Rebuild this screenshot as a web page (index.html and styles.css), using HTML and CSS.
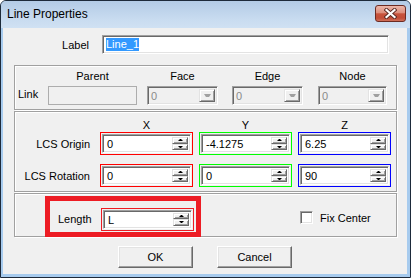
FILE: index.html
```html
<!DOCTYPE html>
<html lang="en">
<head>
    <meta charset="UTF-8">
    <title>Line Properties</title>
    <link rel="stylesheet" href="styles.css">
</head>
<body>
    <div class="window">
        <div class="titlebar">
            <span class="title">Line Properties</span>
            <div class="close-btn">
                <svg width="13" height="11" viewBox="0 0 13 11">
                    <path d="M2.5 2 L10.5 9 M10.5 2 L2.5 9" stroke="#5a2a24" stroke-width="4" stroke-linecap="square"/>
                    <path d="M2.5 2 L10.5 9 M10.5 2 L2.5 9" stroke="#fff" stroke-width="2.2" stroke-linecap="square"/>
                </svg>
            </div>
        </div>

        <div class="client">
            <div class="label-row">
                <span class="caption">Label</span>
                <div class="textbox sunken"><span class="selected">Line_1</span></div>
            </div>

            <div class="group link-group">
                <span class="link-label">Link</span>
                <div class="col col-parent">
                    <div class="col-head">Parent</div>
                    <div class="field-disabled"></div>
                </div>
                <div class="col col-face">
                    <div class="col-head">Face</div>
                    <div class="combo sunken"><span class="val">0</span><span class="drop raised"><i class="arrow-down"></i></span></div>
                </div>
                <div class="col col-edge">
                    <div class="col-head">Edge</div>
                    <div class="combo sunken"><span class="val">0</span><span class="drop raised"><i class="arrow-down"></i></span></div>
                </div>
                <div class="col col-node">
                    <div class="col-head">Node</div>
                    <div class="combo sunken"><span class="val">0</span><span class="drop raised"><i class="arrow-down"></i></span></div>
                </div>
            </div>

            <div class="group lcs-group">
                <div class="lcs-row lcs-head">
                    <span></span>
                    <span>X</span>
                    <span>Y</span>
                    <span>Z</span>
                </div>
                <div class="lcs-row">
                    <span class="row-label">LCS Origin</span>
                    <div class="spin red"><div class="edit sunken"><span class="val">0</span><span class="spin-btns"><span class="raised"><i class="arrow-up"></i></span><span class="raised"><i class="arrow-down"></i></span></span></div></div>
                    <div class="spin green"><div class="edit sunken"><span class="val">-4.1275</span><span class="spin-btns"><span class="raised"><i class="arrow-up"></i></span><span class="raised"><i class="arrow-down"></i></span></span></div></div>
                    <div class="spin blue"><div class="edit sunken"><span class="val">6.25</span><span class="spin-btns"><span class="raised"><i class="arrow-up"></i></span><span class="raised"><i class="arrow-down"></i></span></span></div></div>
                </div>
                <div class="lcs-row second">
                    <span class="row-label">LCS Rotation</span>
                    <div class="spin red"><div class="edit sunken"><span class="val">0</span><span class="spin-btns"><span class="raised"><i class="arrow-up"></i></span><span class="raised"><i class="arrow-down"></i></span></span></div></div>
                    <div class="spin green"><div class="edit sunken"><span class="val">0</span><span class="spin-btns"><span class="raised"><i class="arrow-up"></i></span><span class="raised"><i class="arrow-down"></i></span></span></div></div>
                    <div class="spin blue"><div class="edit sunken"><span class="val">90</span><span class="spin-btns"><span class="raised"><i class="arrow-up"></i></span><span class="raised"><i class="arrow-down"></i></span></span></div></div>
                </div>
            </div>

            <div class="group length-group">
                <div class="highlight">
                    <span class="length-label">Length</span>
                    <div class="spin red"><div class="edit sunken"><span class="val">L</span><span class="spin-btns"><span class="raised"><i class="arrow-up"></i></span><span class="raised"><i class="arrow-down"></i></span></span></div></div>
                </div>
                <div class="fix">
                    <span class="checkbox sunken"></span>
                    <span>Fix Center</span>
                </div>
            </div>

            <div class="buttons">
                <div class="button">OK</div>
                <div class="button">Cancel</div>
            </div>
        </div>
    </div>
</body>
</html>
```

FILE: styles.css
```css
body {
    margin: 0;
    font-family: "Liberation Sans", Arial, sans-serif;
    font-size: 11px;
    color: #000;
    background: #fff;
}
.window {
    width: 411px;
    height: 278px;
    box-sizing: border-box;
    border: 1px solid #1d2a3a;
    border-radius: 6px 6px 0 0;
    background: #a7cbee;
    display: flex;
    flex-direction: column;
    overflow: hidden;
}
.titlebar {
    height: 27px;
    flex: none;
    display: flex;
    align-items: flex-start;
    background: linear-gradient(#b3cbe6, #c9dcf0 70%, #d0e1f3);
}
.title {
    font-size: 12px;
    line-height: 27px;
    padding-left: 6px;
    color: #000;
}
.close-btn {
    margin: 4px 4px 0 auto;
    width: 31px;
    height: 17px;
    box-sizing: border-box;
    border: 1px solid #6c2b22;
    border-radius: 3px;
    background: linear-gradient(#ecb7aa, #dd8f7d 45%, #c8543d 52%, #c14d37 80%, #d0705a);
    display: flex;
    align-items: center;
    justify-content: center;
}
.client {
    flex: 1;
    margin: 0 3px 3px 2px;
    background: #f0f0f0;
    padding-top: 7px;
}

/* 3d borders */
.sunken {
    box-sizing: border-box;
    border: 1px solid;
    border-color: #a0a0a0 #fff #fff #a0a0a0;
    box-shadow: inset 1px 1px 0 #696969, inset -1px -1px 0 #e3e3e3;
}
.raised {
    box-sizing: border-box;
    border: 1px solid;
    border-color: #e3e3e3 #696969 #696969 #e3e3e3;
    box-shadow: inset 1px 1px 0 #fff, inset -1px -1px 0 #a0a0a0;
    background: #f0f0f0;
}
.arrow-up, .arrow-down {
    display: block;
    width: 1px;
    border-left: 2px solid transparent;
    border-right: 2px solid transparent;
}
.arrow-up {
    border-bottom: 2px solid #000;
}
.arrow-down {
    border-top: 2px solid #000;
}

.label-row {
    display: flex;
    align-items: center;
    height: 19px;
}
.caption {
    width: 86px;
    text-align: right;
    margin-right: 13px;
}
.textbox {
    width: 287px;
    height: 19px;
    background: #fff;
    padding-left: 3px;
    display: flex;
    align-items: center;
}
.selected {
    background: #3399ff;
    color: #fff;
    line-height: 13px;
}

.group {
    box-sizing: border-box;
    width: 383px;
    margin-left: 11px;
    border: 1px solid #a0a0a0;
    box-shadow: inset 1px 1px 0 #fff, 1px 1px 0 #fff;
}
.link-group {
    margin-top: 11px;
    height: 45px;
    display: flex;
    padding: 3px 0 0 3px;
}
.link-label {
    width: 30px;
    align-self: flex-end;
    margin-bottom: 9px;
}
.col-head {
    text-align: center;
    line-height: 14px;
    margin-bottom: 3px;
}
.col-parent { width: 89px; margin-right: 10px; }
.col-face { width: 71px; margin-right: 14px; }
.col-edge { width: 71px; margin-right: 15px; }
.col-node { width: 69px; }
.field-disabled {
    height: 19px;
    box-sizing: border-box;
    border: 1px solid #adadad;
    background: #f0f0f0;
}
.combo {
    height: 19px;
    display: flex;
    background: #f0f0f0;
    padding: 2px;
}
.combo .val {
    flex: 1;
    color: #8a8a8a;
    line-height: 15px;
    padding-left: 1px;
}
.drop {
    width: 16px;
    display: flex;
    align-items: center;
    justify-content: center;
}
.drop .arrow-down {
    border-top-color: #a0a0a0;
    width: 3px;
    border-left-width: 2px;
    border-right-width: 2px;
    border-top-width: 3px;
}

.lcs-group {
    margin-top: 1px;
    height: 81px;
    padding: 6px 0 0 3px;
}
.lcs-row {
    display: grid;
    grid-template-columns: 76px 93px 93px 93px;
    column-gap: 6px;
    align-items: center;
}
.lcs-head {
    line-height: 14px;
    text-align: center;
}
.lcs-row.second {
    margin-top: 9px;
}
.row-label {
    text-align: right;
    padding-right: 4px;
}

.spin {
    box-sizing: border-box;
    width: 93px;
    height: 23px;
    padding: 1px;
    border: 1px solid #f00;
}
.spin.green { border-color: #0f0; }
.spin.blue { border-color: #00f; }
.edit {
    height: 100%;
    background: #fff;
    display: flex;
    padding: 2px;
}
.edit .val {
    flex: 1;
    line-height: 15px;
    padding-left: 2px;
}
.spin-btns {
    width: 16px;
    display: flex;
    flex-direction: column;
}
.spin-btns span {
    flex: 1;
    display: flex;
    align-items: center;
    justify-content: center;
}

.length-group {
    margin-top: 1px;
    height: 44px;
    display: flex;
    align-items: flex-start;
}
.highlight {
    box-sizing: border-box;
    margin: 2px 0 0 30px;
    width: 156px;
    height: 41px;
    border: 5px solid #ed1c24;
    padding: 5px 0 0 8px;
    display: flex;
    align-items: center;
    align-self: flex-start;
}
.highlight .spin {
    border-color: #ed1c24;
}
.length-label {
    width: 33px;
    margin-right: 10px;
}
.fix {
    display: flex;
    align-items: center;
    margin: 17px 0 0 99px;
}
.checkbox {
    width: 13px;
    height: 13px;
    background: #fff;
    margin-right: 7px;
}

.buttons {
    display: flex;
    justify-content: center;
    gap: 24px;
    margin-top: 9px;
}
.button {
    width: 75px;
    height: 22px;
    line-height: 20px;
    text-align: center;
    box-sizing: border-box;
    border: 1px solid;
    border-color: #fff #696969 #696969 #fff;
    box-shadow: inset -1px -1px 0 #a0a0a0, inset 1px 1px 0 #e3e3e3;
    background: #f0f0f0;
}
```
